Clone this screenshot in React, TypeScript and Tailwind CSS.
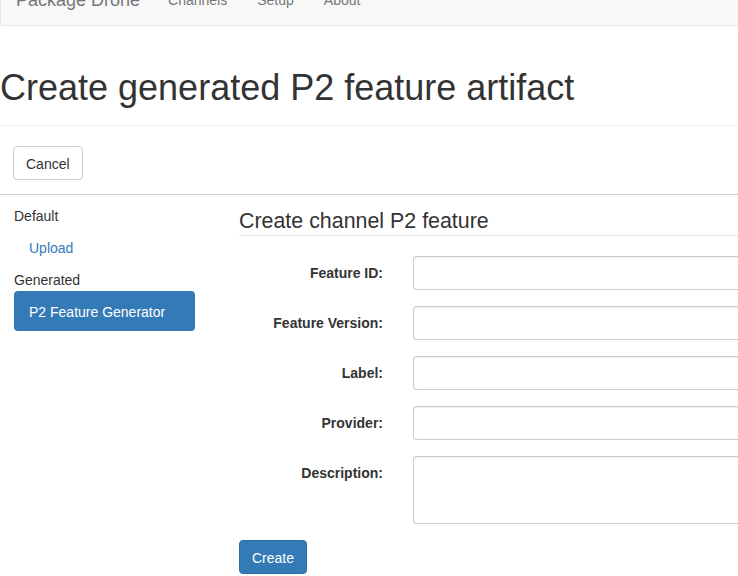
export default function App() {
  const fields = ["Feature ID:", "Feature Version:", "Label:", "Provider:"];

  return (
    <div className="w-full min-h-screen overflow-hidden bg-white font-['Liberation_Sans',Arial,sans-serif] text-[14px] leading-[20px] text-[#333]">
      <nav className="-mt-[26px] h-[52px] flex border border-r-0 border-[#e7e7e7] bg-[#f8f8f8] rounded-l-[4px] text-[#777]">
        <a className="pl-[15px] pr-[13px] py-[15px] text-[18px] leading-[20px]">Package Drone</a>
        <a className="px-[15px] py-[15px]">Channels</a>
        <a className="px-[15px] py-[15px]">Setup</a>
        <a className="px-[15px] py-[15px]">About</a>
      </nav>

      <div className="pt-[42px] pb-[17px] border-b border-[#eee]">
        <h1 className="text-[36px] leading-[40px] font-normal">Create generated P2 feature artifact</h1>
      </div>

      <div className="pl-[13px] pt-[20px] pb-[14px] border-b border-[#ccc]">
        <button className="h-[34px] px-[12px] pt-[1px] rounded-[4px] border border-[#ccc] bg-white text-[#333]">Cancel</button>
      </div>

      <div className="flex">
        <div className="ml-[14px] w-[181px] pt-[11px] flex flex-col">
          <div className="h-[20px]">Default</div>
          <a className="mt-[2px] px-[15px] py-[10px] text-[#337ab7]">Upload</a>
          <div className="mt-[2px] h-[20px]">Generated</div>
          <a className="mt-[1px] px-[15px] pt-[11px] pb-[9px] rounded-[4px] bg-[#337ab7] text-white">P2 Feature Generator</a>
        </div>

        <div className="ml-[44px] flex-1 pt-[13px]">
          <div className="text-[21.4px] leading-[27px] border-b border-[#e5e5e5]">Create channel P2 feature</div>

          <form className="mt-[20px] grid grid-cols-[144px_1fr] gap-x-[30px] gap-y-[16px]">
            {fields.map((f) => (
              <div key={f} className="contents">
                <label className="pt-[7px] text-right font-bold">{f}</label>
                <input className="h-[34px] w-full rounded-l-[4px] border border-r-0 border-[#ccc] bg-white shadow-[inset_0_1px_1px_rgba(0,0,0,0.075)]" />
              </div>
            ))}
            <label className="pt-[7px] text-right font-bold">Description:</label>
            <textarea className="h-[68px] w-full resize-none rounded-l-[4px] border border-r-0 border-[#ccc] bg-white shadow-[inset_0_1px_1px_rgba(0,0,0,0.075)]" />
          </form>

          <button className="mt-[16px] h-[34px] px-[12px] pt-[1px] rounded-[4px] border border-[#2e6da4] bg-[#337ab7] text-white">Create</button>
        </div>
      </div>
    </div>
  );
}
